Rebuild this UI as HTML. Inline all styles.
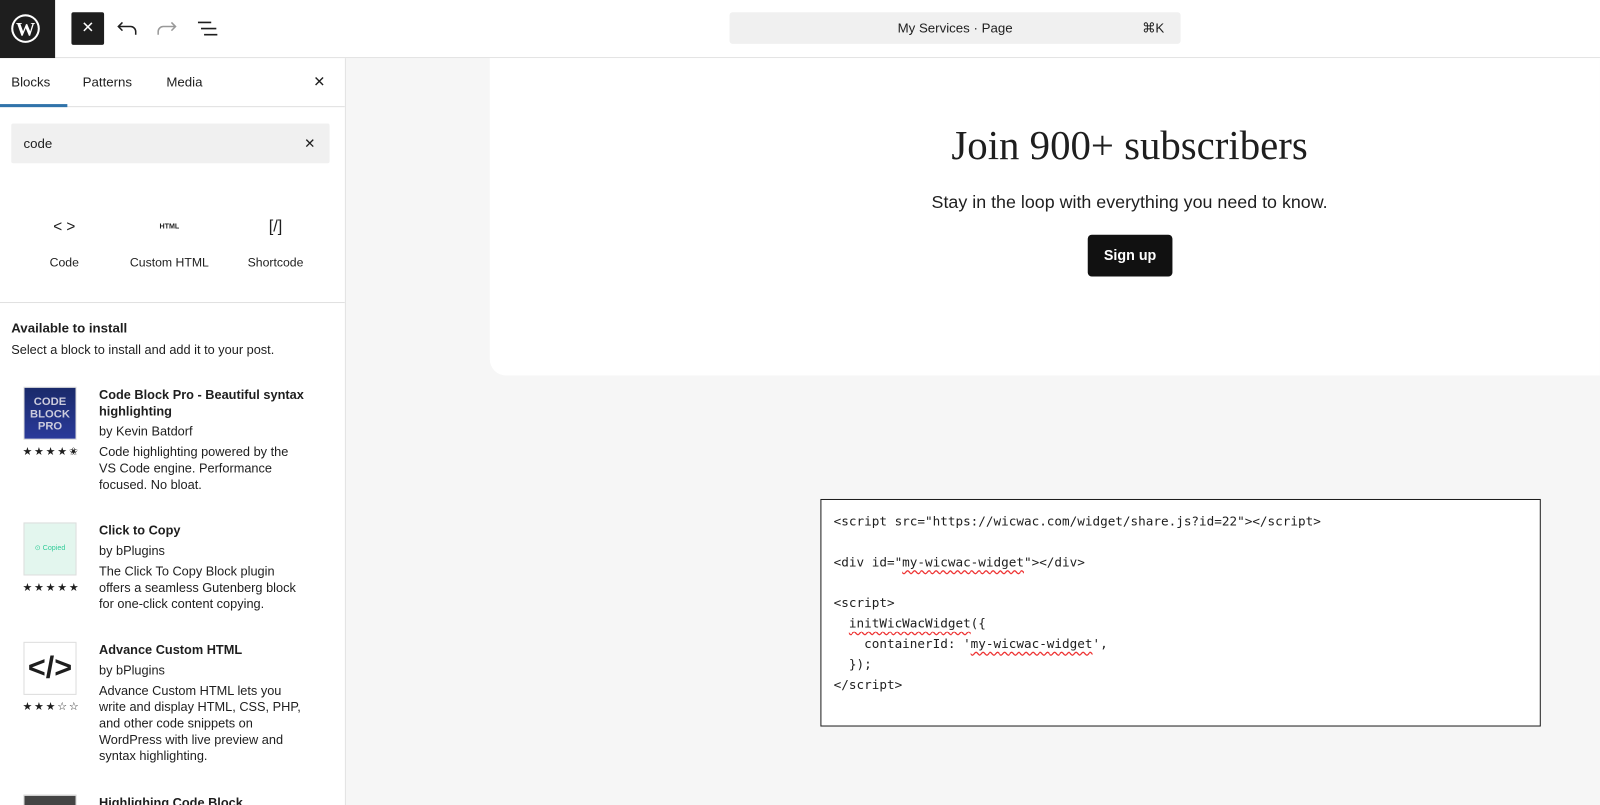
<!DOCTYPE html>
<html><head><meta charset="utf-8"><style>
*{box-sizing:border-box;margin:0;padding:0}
html,body{overflow:hidden}
body{width:1600px;height:805px;font-family:"Liberation Sans",sans-serif;color:#1e1e1e;background:#f6f6f6;position:relative}
#w{position:absolute;left:0;top:0;width:1568px;height:789px;transform:scale(1.0204);transform-origin:0 0;overflow:hidden}
.top{position:absolute;left:0;top:0;width:1568px;height:57px;border-bottom:1px solid #e0e0e0;background:#fff}
.wp{position:absolute;left:0;top:0;width:54px;height:57px;background:#1e1e1e}
.xbtn{position:absolute;left:70px;top:12px;width:32px;height:32px;background:#1e1e1e;border-radius:2px;color:#fff;text-align:center;line-height:32px;font-size:15px}
.cmd{position:absolute;left:715px;top:12px;width:442px;height:31px;background:#f0f0f0;border-radius:3px;font-size:13px;line-height:31px;text-align:center}
.side{position:absolute;left:0;top:57px;width:339px;height:732px;border-right:1px solid #e0e0e0;background:#fff;overflow:hidden}
.tabs{height:48px;border-bottom:1px solid #e0e0e0;position:relative;font-size:13px}
.tabs span{position:absolute;top:16px}
.search{position:absolute;left:11px;top:64px;width:312px;height:39px;background:#f0f0f0;border-radius:2px;font-size:13px;line-height:39px;padding-left:12px}
.blk{position:absolute;top:157px;width:100px;text-align:center;font-size:12px}
.sep{position:absolute;left:0;top:239px;width:338px;border-top:1px solid #e0e0e0}
.item{position:absolute;left:23px;width:300px;font-size:12.5px;line-height:16px}
.item .ic{position:absolute;left:0;top:0;width:52px;height:52px;border:1px solid #ddd}
.item .st{position:absolute;left:-1px;top:56px;font-size:11px;letter-spacing:1.5px}
.item .t{position:absolute;left:74px;top:0;width:204px}
.item b{font-weight:bold}
.canvas{position:absolute;left:339px;top:57px;width:1229px;height:732px;background:#f6f6f6}
.card{position:absolute;left:141px;top:0;width:1088px;height:311px;background:#fff;border-radius:0 0 0 16px}
.code{position:absolute;left:804px;top:489px;width:706px;height:223px;border:1px solid #1e1e1e;background:#fff;font-family:"DejaVu Sans Mono","Liberation Mono",monospace;font-size:12.4px;line-height:20px;padding:11px 12px;white-space:pre}
.u{text-decoration:underline wavy #e33;text-underline-offset:3px}
</style></head><body><div id="w">
<div class="top">
 <div class="wp"><svg width="54" height="57" viewBox="0 0 54 57"><circle cx="25" cy="28" r="14" fill="#fff"/><circle cx="25" cy="28" r="12" fill="#1e1e1e"/><text x="25" y="35" font-family="Liberation Serif" font-weight="bold" font-size="19" fill="#fff" text-anchor="middle">W</text></svg></div>
 <div class="xbtn">✕</div>
 <svg style="position:absolute;left:114px;top:18px" width="22" height="20"><path d="M6 4 L2 8 L6 12 M2 8 H14 A5 5 0 0 1 19 13 V16" fill="none" stroke="#1e1e1e" stroke-width="1.5"/></svg>
 <svg style="position:absolute;left:153px;top:18px" width="22" height="20"><path d="M15 4 L19 8 L15 12 M19 8 H7 A5 5 0 0 0 2 13 V16" fill="none" stroke="#999" stroke-width="1.5"/></svg>
 <svg style="position:absolute;left:193px;top:19px" width="22" height="18"><path d="M1 3H14M4 9H19M7 15H20" stroke="#1e1e1e" stroke-width="1.5"/></svg>
 <div class="cmd">My Services · Page<span style="position:absolute;right:16px">⌘K</span></div>
</div>
<div class="side">
 <div class="tabs"><span style="left:11px">Blocks</span><span style="left:81px">Patterns</span><span style="left:163px">Media</span><span style="left:307px;top:15px;font-size:14px">✕</span>
 <div style="position:absolute;left:0;top:45px;width:66px;height:3px;background:#3073aa"></div></div>
 <div class="search">code<span style="position:absolute;right:14px;font-size:13px">✕</span></div>
 <div class="blk" style="left:13px"><div style="font-size:15px;height:36px">&lt; &gt;</div>Code</div>
 <div class="blk" style="left:116px"><div style="font-size:7px;font-weight:bold;height:36px;line-height:18px">HTML</div>Custom HTML</div>
 <div class="blk" style="left:220px"><div style="font-size:16px;height:36px">[/]</div>Shortcode</div>
 <div class="sep"></div>
 <div style="position:absolute;left:11px;top:257px;font-size:13px;font-weight:bold">Available to install</div>
 <div style="position:absolute;left:11px;top:279px;font-size:12.5px">Select a block to install and add it to your post.</div>
 <div class="item" style="top:322px"><div class="ic" style="background:linear-gradient(#1a2a6a,#2a3a9a);color:#ccd;font-weight:bold;font-size:11px;line-height:12px;text-align:center;padding-top:8px">CODE<br>BLOCK<br>PRO</div><div class="st">★★★★✬</div><div class="t"><b>Code Block Pro - Beautiful syntax highlighting</b><br><span style="line-height:24px">by Kevin Batdorf</span><br>Code highlighting powered by the VS Code engine. Performance focused. No bloat.</div></div>
 <div class="item" style="top:455px"><div class="ic" style="background:#e3f6ee;color:#3c9;font-size:7px;line-height:50px;text-align:center">⊙ Copied</div><div class="st">★★★★★</div><div class="t"><b>Click to Copy</b><br><span style="line-height:24px">by bPlugins</span><br>The Click To Copy Block plugin offers a seamless Gutenberg block for one-click content copying.</div></div>
 <div class="item" style="top:572px"><div class="ic" style="font-size:30px;font-weight:bold;text-align:center;line-height:50px">&lt;/&gt;</div><div class="st">★★★☆☆</div><div class="t"><b>Advance Custom HTML</b><br><span style="line-height:24px">by bPlugins</span><br>Advance Custom HTML lets you write and display HTML, CSS, PHP, and other code snippets on WordPress with live preview and syntax highlighting.</div></div>
 <div class="item" style="top:722px"><div class="ic" style="background:#444"></div><div class="t"><b>Highlighing Code Block</b></div></div>
</div>
<div class="canvas">
 <div class="card">
  <div style="position:absolute;left:0;width:1254px;top:62px;text-align:center;font-family:'Liberation Serif',serif;font-size:40px">Join 900+ subscribers</div>
  <div style="position:absolute;left:0;width:1254px;top:131px;text-align:center;font-size:17.5px">Stay in the loop with everything you need to know.</div>
  <div style="position:absolute;left:586px;top:173px;width:83px;height:41px;background:#111;border-radius:4px;color:#fff;font-weight:bold;font-size:14px;text-align:center;line-height:41px">Sign up</div>
 </div>
</div>
<div class="code">&lt;script src="https://wicwac.com/widget/share.js?id=22"&gt;&lt;/script&gt;

&lt;div id="<span class="u">my-wicwac-widget</span>"&gt;&lt;/div&gt;

&lt;script&gt;
  <span class="u">initWicWacWidget</span>({
    containerId: '<span class="u">my-wicwac-widget</span>',
  });
&lt;/script&gt;</div>
</div></body></html>
